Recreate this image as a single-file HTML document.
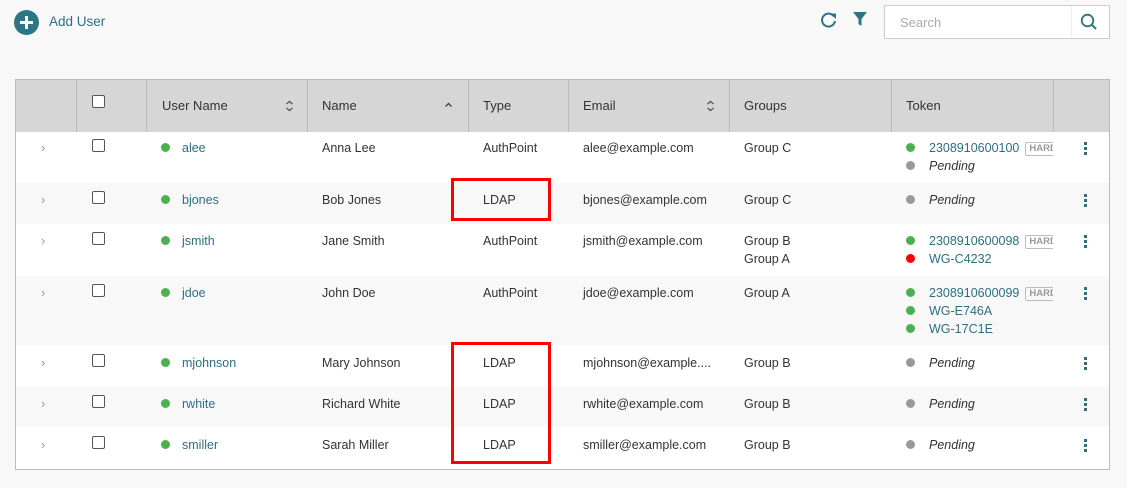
<!DOCTYPE html>
<html><head><meta charset="utf-8"><style>
*{box-sizing:border-box;margin:0;padding:0}
body{width:1127px;height:488px;background:#f8f8f8;font-family:"Liberation Sans",Arial,sans-serif;font-size:12.5px;color:#333;position:relative;overflow:hidden}
.abs{position:absolute}
.tbl{position:absolute;left:15px;top:79px;width:1095px;height:391px;border:1px solid #bbb;background:#fff}
.hdr{position:absolute;left:0;top:0;width:100%;height:52px;background:#d6d6d6}
.vl{position:absolute;top:0;height:52px;width:1px;background:#bbb}
.row{position:absolute;left:0;width:100%}
.g{background:#f8f8f8}
.t{position:absolute;white-space:nowrap;line-height:18px}
.lnk{color:#2d6f80}
.dot{display:inline-block;width:9px;height:9px;border-radius:50%;margin-right:12px;vertical-align:0}
.tk .dot{margin-right:14px}
.gr{background:#4caf50}.gy{background:#999}.rd{background:#f00}
.cb{position:absolute;width:13px;height:13px;border:1px solid #555;border-radius:2px;background:#fff}
.chev{position:absolute;color:#999;font-size:13px}
.kb{position:absolute;width:3px}
.kb i{display:block;width:3px;height:3px;background:#2d6f80;margin-bottom:2px}
.hard{display:inline-block;border:1px solid #bbb;border-radius:2px;font-size:9.5px;font-weight:bold;color:#999;padding:0 3px;line-height:12px;vertical-align:1px;margin-left:6px}
.pend{font-style:italic;color:#333}
.red{position:absolute;border:3px solid #f00}
</style></head><body>
<div class="abs" style="left:14px;top:10px;width:25px;height:25px;border-radius:50%;background:#2d7485"></div>
<div class="abs" style="left:20px;top:21px;width:13px;height:3px;background:#fff"></div>
<div class="abs" style="left:25px;top:16px;width:3px;height:13px;background:#fff"></div>
<div class="abs lnk" style="left:49px;top:14px;font-size:13.5px">Add User</div>
<svg class="abs" style="left:819px;top:10px" width="20" height="20" viewBox="0 0 20 20"><path d="M15 6.5A6.5 6.5 0 1 0 16 11" fill="none" stroke="#2d7485" stroke-width="2"/><path d="M11.5 3.5H17V9z" fill="#2d7485"/></svg>
<svg class="abs" style="left:853px;top:12px" width="14" height="14" viewBox="0 0 14 14"><path d="M0 0H14L8.5 7V14L5.5 12V7z" fill="#2d7485"/></svg>
<div class="abs" style="left:884px;top:5px;width:226px;height:34px;border:1px solid #ccc;background:#fff"></div>
<div class="abs" style="left:1071px;top:6px;width:1px;height:32px;background:#eee"></div>
<div class="abs" style="left:900px;top:15px;color:#aaa;font-size:13px">Search</div>
<svg class="abs" style="left:1080px;top:13px" width="18" height="18" viewBox="0 0 18 18"><circle cx="7.5" cy="7.5" r="5.8" fill="none" stroke="#2d7485" stroke-width="1.8"/><path d="M11.5 11.5L16 16" stroke="#2d7485" stroke-width="2"/></svg>

<div class="tbl">
<div class="hdr">
<div class="vl" style="left:60px"></div><div class="vl" style="left:130px"></div><div class="vl" style="left:291px"></div><div class="vl" style="left:452px"></div><div class="vl" style="left:552px"></div><div class="vl" style="left:713px"></div><div class="vl" style="left:875px"></div><div class="vl" style="left:1037px"></div>
<div class="cb" style="left:76px;top:15px"></div>
<div class="t" style="left:146px;top:17px;font-size:13px">User Name</div>
<div class="t" style="left:306px;top:17px;font-size:13px">Name</div>
<div class="t" style="left:467px;top:17px;font-size:13px">Type</div>
<div class="t" style="left:567px;top:17px;font-size:13px">Email</div>
<div class="t" style="left:728px;top:17px;font-size:13px">Groups</div>
<div class="t" style="left:890px;top:17px;font-size:13px">Token</div>
<svg class="abs" style="left:269px;top:20px" width="9" height="12" viewBox="0 0 9 12"><path d="M1.5 4L4.5 1.5L7.5 4M1.5 8L4.5 10.5L7.5 8" fill="none" stroke="#555" stroke-width="1.3"/></svg>
<svg class="abs" style="left:428px;top:21px" width="9" height="8" viewBox="0 0 9 8"><path d="M1.5 5.5L4.5 2.5L7.5 5.5" fill="none" stroke="#444" stroke-width="1.4"/></svg>
<svg class="abs" style="left:690px;top:20px" width="9" height="12" viewBox="0 0 9 12"><path d="M1.5 4L4.5 1.5L7.5 4M1.5 8L4.5 10.5L7.5 8" fill="none" stroke="#555" stroke-width="1.3"/></svg>
</div>

<div class="row" style="top:51px;height:52px"></div>
<div class="row g" style="top:103px;height:41px"></div>
<div class="row" style="top:144px;height:52px"></div>
<div class="row g" style="top:196px;height:69px"></div>
<div class="row" style="top:265px;height:41px"></div>
<div class="row g" style="top:306px;height:41px"></div>
<div class="row" style="top:347px;height:42px"></div>

<!-- row 1 -->
<div class="chev" style="left:25px;top:60px">›</div><div class="cb" style="left:76px;top:59px"></div>
<div class="t lnk" style="left:145px;top:59px"><span class="dot gr"></span>alee</div>
<div class="t" style="left:306px;top:59px">Anna Lee</div><div class="t" style="left:467px;top:59px">AuthPoint</div>
<div class="t" style="left:567px;top:59px">alee@example.com</div><div class="t" style="left:728px;top:59px">Group C</div>
<div class="t lnk tk" style="left:890px;top:59px;width:147px;overflow:hidden"><span class="dot gr"></span>2308910600100<span class="hard">HARDWARE</span></div>
<div class="t tk" style="left:890px;top:77px"><span class="dot gy"></span><span class="pend">Pending</span></div>
<div class="kb" style="left:1068px;top:62px"><i></i><i></i><i></i></div>
<!-- row 2 -->
<div class="chev" style="left:25px;top:112px">›</div><div class="cb" style="left:76px;top:111px"></div>
<div class="t lnk" style="left:145px;top:111px"><span class="dot gr"></span>bjones</div>
<div class="t" style="left:306px;top:111px">Bob Jones</div><div class="t" style="left:467px;top:111px">LDAP</div>
<div class="t" style="left:567px;top:111px">bjones@example.com</div><div class="t" style="left:728px;top:111px">Group C</div>
<div class="t tk" style="left:890px;top:111px"><span class="dot gy"></span><span class="pend">Pending</span></div>
<div class="kb" style="left:1068px;top:114px"><i></i><i></i><i></i></div>
<!-- row 3 -->
<div class="chev" style="left:25px;top:153px">›</div><div class="cb" style="left:76px;top:152px"></div>
<div class="t lnk" style="left:145px;top:152px"><span class="dot gr"></span>jsmith</div>
<div class="t" style="left:306px;top:152px">Jane Smith</div><div class="t" style="left:467px;top:152px">AuthPoint</div>
<div class="t" style="left:567px;top:152px">jsmith@example.com</div><div class="t" style="left:728px;top:152px">Group B<br>Group A</div>
<div class="t lnk tk" style="left:890px;top:152px;width:147px;overflow:hidden"><span class="dot gr"></span>2308910600098<span class="hard">HARDWARE</span></div>
<div class="t lnk tk" style="left:890px;top:170px"><span class="dot rd"></span>WG-C4232</div>
<div class="kb" style="left:1068px;top:155px"><i></i><i></i><i></i></div>
<!-- row 4 -->
<div class="chev" style="left:25px;top:205px">›</div><div class="cb" style="left:76px;top:204px"></div>
<div class="t lnk" style="left:145px;top:204px"><span class="dot gr"></span>jdoe</div>
<div class="t" style="left:306px;top:204px">John Doe</div><div class="t" style="left:467px;top:204px">AuthPoint</div>
<div class="t" style="left:567px;top:204px">jdoe@example.com</div><div class="t" style="left:728px;top:204px">Group A</div>
<div class="t lnk tk" style="left:890px;top:204px;width:147px;overflow:hidden"><span class="dot gr"></span>2308910600099<span class="hard">HARDWARE</span></div>
<div class="t lnk tk" style="left:890px;top:222px"><span class="dot gr"></span>WG-E746A</div>
<div class="t lnk tk" style="left:890px;top:240px"><span class="dot gr"></span>WG-17C1E</div>
<div class="kb" style="left:1068px;top:207px"><i></i><i></i><i></i></div>
<!-- row 5 -->
<div class="chev" style="left:25px;top:275px">›</div><div class="cb" style="left:76px;top:274px"></div>
<div class="t lnk" style="left:145px;top:274px"><span class="dot gr"></span>mjohnson</div>
<div class="t" style="left:306px;top:274px">Mary Johnson</div><div class="t" style="left:467px;top:274px">LDAP</div>
<div class="t" style="left:567px;top:274px">mjohnson@example....</div><div class="t" style="left:728px;top:274px">Group B</div>
<div class="t tk" style="left:890px;top:274px"><span class="dot gy"></span><span class="pend">Pending</span></div>
<div class="kb" style="left:1068px;top:277px"><i></i><i></i><i></i></div>
<!-- row 6 -->
<div class="chev" style="left:25px;top:316px">›</div><div class="cb" style="left:76px;top:315px"></div>
<div class="t lnk" style="left:145px;top:315px"><span class="dot gr"></span>rwhite</div>
<div class="t" style="left:306px;top:315px">Richard White</div><div class="t" style="left:467px;top:315px">LDAP</div>
<div class="t" style="left:567px;top:315px">rwhite@example.com</div><div class="t" style="left:728px;top:315px">Group B</div>
<div class="t tk" style="left:890px;top:315px"><span class="dot gy"></span><span class="pend">Pending</span></div>
<div class="kb" style="left:1068px;top:318px"><i></i><i></i><i></i></div>
<!-- row 7 -->
<div class="chev" style="left:25px;top:357px">›</div><div class="cb" style="left:76px;top:356px"></div>
<div class="t lnk" style="left:145px;top:356px"><span class="dot gr"></span>smiller</div>
<div class="t" style="left:306px;top:356px">Sarah Miller</div><div class="t" style="left:467px;top:356px">LDAP</div>
<div class="t" style="left:567px;top:356px">smiller@example.com</div><div class="t" style="left:728px;top:356px">Group B</div>
<div class="t tk" style="left:890px;top:356px"><span class="dot gy"></span><span class="pend">Pending</span></div>
<div class="kb" style="left:1068px;top:359px"><i></i><i></i><i></i></div>
</div>

<div class="red" style="left:451px;top:178px;width:100px;height:43px"></div>
<div class="red" style="left:451px;top:342px;width:100px;height:122px"></div>
</body></html>
